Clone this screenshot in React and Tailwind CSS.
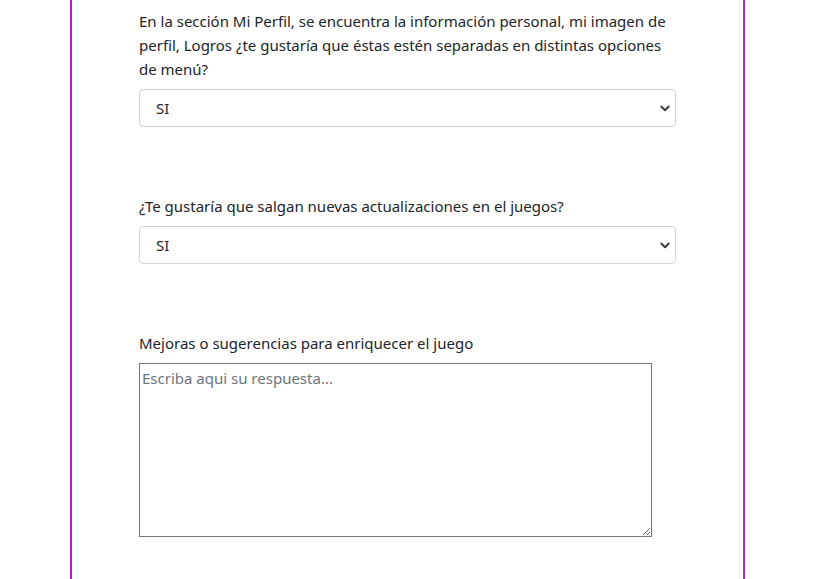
import { useState } from "react";

function Chevron() {
  return (
    <svg
      className="pointer-events-none absolute right-[5px] top-1/2 -translate-y-1/2"
      width="12"
      height="12"
      viewBox="0 0 16 16"
      fill="none"
    >
      <path
        d="M3 6l5 5 5-5"
        stroke="#343a40"
        strokeWidth="2.5"
        strokeLinecap="round"
        strokeLinejoin="round"
      />
    </svg>
  );
}

function SelectField({ label, name, value, onChange }) {
  return (
    <div>
      <label htmlFor={name} className="block mb-2 leading-6">
        {label}
      </label>
      <div className="relative w-[537px]">
        <select
          id={name}
          name={name}
          value={value}
          onChange={onChange}
          className="appearance-none block w-full h-[38px] border border-[#ced4da] rounded-[4px] bg-white pl-4 pr-9 text-[#212529] leading-6 outline-none"
        >
          <option value="SI">SI</option>
          <option value="NO">NO</option>
        </select>
        <Chevron />
      </div>
    </div>
  );
}

export default function App() {
  const [form, setForm] = useState({
    perfil: "SI",
    actualizaciones: "SI",
    sugerencias: "",
  });

  const handleChange = (e) => {
    setForm({ ...form, [e.target.name]: e.target.value });
  };

  return (
    <main
      className="min-h-screen bg-white text-[#212529] text-[15px]"
      style={{ fontFamily: '"Noto Sans", "Open Sans", sans-serif' }}
    >
      <div className="ml-[70px] w-[675px] min-h-[579px] border-x-2 border-[#b823c3] pl-[67px] pt-[9px] pb-10">
        <div className="w-[537px]">
          <SelectField
            name="perfil"
            label="En la sección Mi Perfil, se encuentra la información personal, mi imagen de perfil, Logros ¿te gustaría que éstas estén separadas en distintas opciones de menú?"
            value={form.perfil}
            onChange={handleChange}
          />
        </div>

        <div className="mt-[67px] w-[537px]">
          <SelectField
            name="actualizaciones"
            label="¿Te gustaría que salgan nuevas actualizaciones en el juegos?"
            value={form.actualizaciones}
            onChange={handleChange}
          />
        </div>

        <div className="mt-[67px]">
          <label htmlFor="sugerencias" className="block mb-2 leading-6">
            Mejoras o sugerencias para enriquecer el juego
          </label>
          <textarea
            id="sugerencias"
            name="sugerencias"
            value={form.sugerencias}
            onChange={handleChange}
            placeholder="Escriba aqui su respuesta..."
            className="block w-[513px] h-[174px] border border-[#767676] px-[2px] py-[2px] leading-6 placeholder:text-[#6c757d] outline-none"
          />
        </div>
      </div>
    </main>
  );
}
